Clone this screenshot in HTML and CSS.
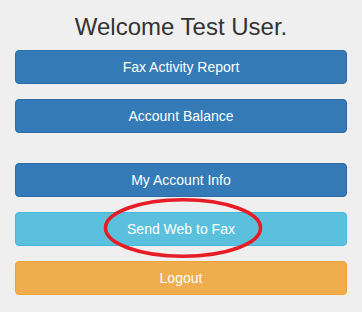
FILE: index.html
```html
<!DOCTYPE html>
<html>
<head>
<meta charset="utf-8">
<link rel="stylesheet" href="styles.css">
</head>
<body>
<div class="page">
  <h3 class="title">Welcome Test User.</h3>
  <div class="menu">
    <a class="btn btn-primary">Fax Activity Report</a>
    <a class="btn btn-primary">Account Balance</a>
    <a class="btn btn-primary gap-before">My Account Info</a>
    <div class="highlight-wrap">
      <a class="btn btn-info">Send Web to Fax</a>
      <svg class="circle" width="164" height="64" viewBox="0 0 164 64">
        <ellipse cx="82" cy="32" rx="77.5" ry="28.2" fill="none" stroke="#e81c24" stroke-width="3.6"/>
      </svg>
    </div>
    <a class="btn btn-warning">Logout</a>
  </div>
</div>
</body>
</html>
```
FILE: styles.css
```css
html, body {
  margin: 0;
  padding: 0;
  background: #efefef;
}
body {
  font-family: "Liberation Sans", Arial, sans-serif;
  color: #333;
  font-size: 14px;
}
.page {
  padding: 0 15px;
}
.title {
  margin: 14px 0 10px;
  font-size: 24px;
  line-height: 26px;
  font-weight: 500;
  text-align: center;
  color: #333;
}
.menu {
  display: flex;
  flex-direction: column;
  gap: 15px;
}
.btn {
  display: block;
  box-sizing: border-box;
  height: 34px;
  padding: 6px 12px;
  font-size: 14px;
  line-height: 20px;
  text-align: center;
  color: #fff;
  border: 1px solid transparent;
  border-radius: 4px;
}
.btn-primary {
  background: #337ab7;
  border-color: #2e6da4;
}
.btn-info {
  background: #5bc0de;
  border-color: #46b8da;
}
.btn-warning {
  background: #f0ad4e;
  border-color: #eea236;
}
.gap-before {
  margin-top: 15px;
}
.highlight-wrap {
  position: relative;
}
.circle {
  position: absolute;
  left: 86px;
  top: -16px;
  pointer-events: none;
}
```
